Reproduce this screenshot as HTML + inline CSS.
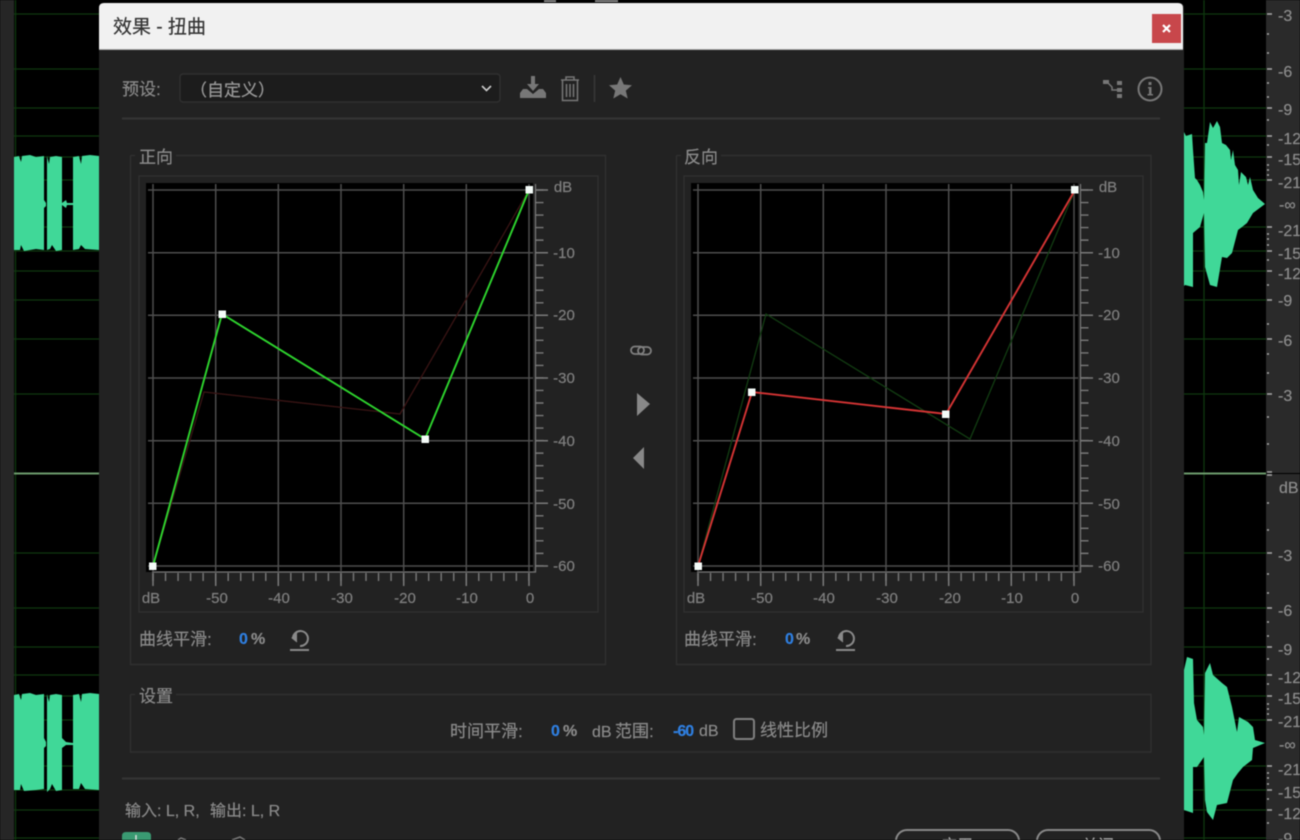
<!DOCTYPE html>
<html><head><meta charset="utf-8"><style>
html,body{margin:0;padding:0;background:#000;width:1300px;height:840px;overflow:hidden}
svg{display:block;filter:blur(.5px)}
text{font-family:"Liberation Sans","Noto Sans CJK SC",sans-serif;fill:#8a8a8a;font-size:15px;stroke:#8a8a8a;stroke-width:.2}
.cn{font-size:17px}
.b{fill:#2f7fe0;stroke:#2f7fe0;font-weight:bold;font-size:16px}
.p{font-weight:bold;font-size:16px}
.ax{font-size:15px;fill:#7f7f7f;stroke:#7f7f7f;text-anchor:middle}
.r{font-size:16px;fill:#8c8c8c;stroke:#8c8c8c}
</style></head><body>
<svg width="1300" height="840" viewBox="0 0 1300 840" xmlns="http://www.w3.org/2000/svg">
<defs>
<g id="plot">
 <rect x="146" y="183" width="387" height="389" fill="#000"/>
 <g stroke="#4e4e4e" stroke-width="1.500" fill="none">
  <path d="M153 184V571M215.700 184V571M278.300 184V571M341 184V571M403.700 184V571M466.300 184V571M529 184V571"/>
  <path d="M148 190H533M148 252.700H533M148 315.300H533M148 378H533M148 440.700H533M148 503.300H533M148 566H533"/>
 </g>
 <g stroke="#7a7a7a" fill="none">
  <path d="M535.500 184V572H152" stroke-width="1.200"/>
  <path d="M536 190H548M536 252.700H548M536 315.300H548M536 378H548M536 440.700H548M536 503.300H548M536 566H548" stroke-width="1.500"/>
  <path d="M153 573V586M215.700 573V586M278.300 573V586M341 573V586M403.700 573V586M466.300 573V586M529 573V586" stroke-width="1.500"/>
  <line x1="539.500" y1="189.300" x2="539.500" y2="566" stroke-width="8" stroke-dasharray="1.400 11.130"/>
  <line x1="152.300" y1="577" x2="529" y2="577" stroke-width="8" stroke-dasharray="1.400 11.130"/>
 </g>
</g>
</defs>

<!-- background -->
<rect width="1300" height="840" fill="#000"/>
<rect x="0" y="0" width="14" height="840" fill="#262626"/>
<rect x="1266" y="0" width="34" height="840" fill="#2a2a2a"/>
<g stroke="#0e380e" stroke-width="1.300" fill="none">
 <path d="M15.500 0V840M1204 0V840"/>
 <path d="M14 14H1266M14 69H1266M14 108H1266M14 136H1266M14 157H1266M14 180H1266M14 227H1266M14 251H1266M14 271H1266M14 300H1266M14 339H1266M14 394H1266M14 553H1266M14 608H1266M14 647H1266M14 675H1266M14 696H1266M14 720H1266M14 766H1266M14 790H1266M14 810H1266M14 838H1266"/>
</g>
<path d="M14 473.500H1266" stroke="#6c9a6c" stroke-width="2"/>
<path d="M1266 473.500H1300" stroke="#000" stroke-width="1"/>
<path d="M544 0H556V2H544ZM595 0H618V2H595Z" fill="#888"/>

<!-- waves -->
<g fill="#40d898">
 <path d="M14 157L19 156 21 162 22 156 30 155 36 157 44 156V250L36 249 24 251 21 245 20 250 14 250ZM47 156L49 164 50 157 56 156 62 157V250L56 251 52 245 50 249 47 250ZM73 157L79 156 81 164 82 156 90 155 99 156V250L85 249 81 245 79 249 73 250Z"/>
 <path d="M44 200L46 203V206L44 208ZM62 203L66 200 67 203H73V205H67L66 208 62 205Z"/>
 <path d="M14 695L19 694 21 700 22 694 30 693 36 695 44 694V789L36 790 24 791 21 784 20 790 14 790ZM47 694L49 702 50 695 56 694 62 695V790L56 791 52 784 50 789 47 792ZM73 695L79 694 81 702 82 694 90 693 99 694V790L85 789 81 783 79 789 73 789Z"/>
 <path d="M44 738L46 742V746L44 748ZM62 738L66 742 73 743V745L66 745 62 748Z"/>
 <path d="M1184 132L1186 136 1192 134 1193 150 1195 178 1197 180 1200 185 1203 192 1204 200 1205 143 1207 143 1210 122 1213 128 1217 121 1220 127 1222 143 1226 145 1230 150 1231 160 1233 150 1235 165 1238 170 1239 185 1241 172 1246 177 1248 185 1250 177 1253 190 1258 198 1265 204 1253 213 1247 223 1242 227 1238 230 1232 253 1227 258 1222 257 1217 287 1210 285 1205 267 1204 213 1200 227 1193 233 1193 287 1185 285 1184 286Z"/>
 <path d="M1184 670L1187 657 1193 659 1194 703 1197 720 1203 727 1204 735 1205 673 1210 663 1213 675 1222 683 1227 687 1232 707 1237 732 1239 717 1248 722 1253 727 1255 740 1265 743 1253 748 1252 760 1243 767 1238 773 1233 780 1227 803 1217 805 1213 820 1207 812 1205 800 1204 757 1197 767 1193 767 1193 813 1184 810Z"/>
</g>

<!-- right ruler -->
<g stroke="#aaa" stroke-width="1.600" fill="none">
 <path d="M1267 14H1272M1267 69H1272M1267 108H1272M1267 136H1272M1267 157H1272M1267 180H1272M1267 227H1272M1267 251H1272M1267 271H1272M1267 300H1272M1267 339H1272M1267 394H1272M1267 472H1272M1267 475H1272M1267 553H1272M1267 608H1272M1267 647H1272M1267 675H1272M1267 696H1272M1267 720H1272M1267 766H1272M1267 790H1272M1267 810H1272"/>
 <path d="M1267 34H1269M1267 53H1269M1267 83H1269M1267 97H1269M1267 120H1269M1267 145H1269M1267 165H1269M1267 170H1269M1267 175H1269M1267 234H1269M1267 239H1269M1267 245H1269M1267 260H1269M1267 285H1269M1267 324H1269M1267 354H1269M1267 373H1269M1267 417H1269M1267 444H1269M1267 503H1269M1267 530H1269M1267 574H1269M1267 593H1269M1267 622H1269M1267 636H1269M1267 659H1269M1267 684H1269M1267 704H1269M1267 709H1269M1267 714H1269M1267 773H1269M1267 778H1269M1267 784H1269M1267 799H1269M1267 823H1269"/>
</g>
<text class="r" x="1278" y="21">-3</text><text class="r" x="1278" y="77">-6</text><text class="r" x="1278" y="115">-9</text>
<text class="r" x="1278" y="144">-12</text><text class="r" x="1278" y="165">-15</text><text class="r" x="1278" y="188">-21</text>
<text class="r" x="1279" y="210">-∞</text><text class="r" x="1278" y="236">-21</text><text class="r" x="1278" y="259">-15</text>
<text class="r" x="1278" y="279">-12</text><text class="r" x="1278" y="306">-9</text><text class="r" x="1278" y="346">-6</text>
<text class="r" x="1278" y="401">-3</text><text class="r" x="1279" y="493">dB</text><text class="r" x="1278" y="561">-3</text>
<text class="r" x="1278" y="616">-6</text><text class="r" x="1278" y="655">-9</text><text class="r" x="1278" y="683">-12</text>
<text class="r" x="1278" y="704">-15</text><text class="r" x="1278" y="727">-21</text><text class="r" x="1279" y="750">-∞</text>
<text class="r" x="1278" y="775">-21</text><text class="r" x="1278" y="798">-15</text><text class="r" x="1278" y="819">-12</text><text class="r" x="1278" y="844">-9</text>

<!-- dialog -->
<path d="M99 850V8Q99 3 104 3H1179Q1184 3 1184 8V850Z" fill="#222"/>
<path d="M99 49V8Q99 3 104 3H1178Q1183 3 1183 8V49Z" fill="#f1f1f1"/>
<rect x="99" y="49" width="1084" height="1" fill="#aaa"/>
<text x="113" y="33" style="font-size:19px;fill:#333;stroke:#333">效果 - 扭曲</text>
<rect x="1152" y="14" width="29" height="29" fill="#c8474b"/>
<path d="M1163 25L1170 32M1170 25L1163 32" stroke="#fff" stroke-width="2.200" fill="none"/>

<!-- toolbar -->
<text class="cn" x="122" y="95">预设:</text>
<rect x="180" y="74" width="320" height="28" rx="3" fill="#1c1c1c" stroke="#303030" stroke-width="1.400"/>
<text class="cn" x="190" y="96" style="fill:#9a9a9a;stroke:#9a9a9a">（自定义）</text>
<path d="M482 86L486.500 90.500 491 86" stroke="#ccc" stroke-width="1.600" fill="none"/>
<path d="M531 76H535V84H539L533 91 527 84H531Z" fill="#777"/>
<path d="M523 89H527L533 94 539 89H543L546 93V98H520V93Z" fill="#777"/>
<g stroke="#777" fill="none" stroke-width="1.500">
 <path d="M561 80H579M566 80V77H574V80M562.500 80.500V100.500H577.500V80.500"/>
 <path d="M566.500 84V97M570 84V97M573.500 84V97"/>
</g>
<rect x="593.500" y="75" width="2" height="27" fill="#333"/>
<path d="M620.500 77L623.800 84.500 632 85.300 625.800 90.600 627.700 98.500 620.500 94.300 613.300 98.500 615.200 90.600 609 85.300 617.200 84.500Z" fill="#777"/>
<g fill="#777">
 <rect x="1103" y="80" width="6" height="4"/><rect x="1117" y="81" width="5" height="4"/><rect x="1117" y="88" width="5" height="4"/><rect x="1117" y="94" width="5" height="4"/>
</g>
<path d="M1108 83L1112 87V90H1117" stroke="#777" stroke-width="1.500" fill="none"/>
<circle cx="1150" cy="89" r="11.500" fill="none" stroke="#777" stroke-width="2"/>
<path d="M1148.500 82h3v3h-3zM1148 87h3.500v7h1.500v1.500h-5.500v-1.500h1.500v-5.500h-1z" fill="#777"/>
<rect x="122" y="117.500" width="1038" height="2" fill="#353535"/>

<!-- fieldsets -->
<g fill="none" stroke="#303030" stroke-width="1.400">
 <path d="M130.500 155.500V664.500H605.500V155.500H176"/><path d="M130.500 155.500H135"/>
 <path d="M676.500 155.500V664.500H1151V155.500H721"/><path d="M676.500 155.500H681"/>
 <path d="M130.500 694.500V752H1151V694.500H176"/><path d="M130.500 694.500H135"/>
 <rect x="139" y="176" width="459" height="436"/>
 <rect x="684" y="176" width="459" height="436"/>
</g>
<text class="cn" x="139" y="163">正向</text>
<text class="cn" x="684" y="163">反向</text>
<text class="cn" x="139" y="702">设置</text>

<use href="#plot"/>
<use href="#plot" x="545"/>

<!-- left curves -->
<polyline points="153,566 204,392 400,414 529,190" fill="none" stroke="#3a1414" stroke-width="1.300"/>
<polyline points="153,566 222,314 425,439 529,190" fill="none" stroke="#2ed62e" stroke-width="1.900"/>
<g fill="#f4fbf8">
 <rect x="149" y="562.500" width="7.500" height="7.500"/><rect x="218.500" y="310.500" width="7.500" height="7.500"/><rect x="421.500" y="435.500" width="7.500" height="7.500"/><rect x="525.500" y="186" width="7.500" height="7.500"/>
</g>
<!-- right curves -->
<polyline points="698,566 766,314 970,439 1075,190" fill="none" stroke="#123d12" stroke-width="1.300"/>
<polyline points="698,566 752,392 946,414 1075,190" fill="none" stroke="#d63434" stroke-width="1.900"/>
<g fill="#f4fbf8">
 <rect x="694.500" y="562.500" width="7.500" height="7.500"/><rect x="748" y="388.500" width="7.500" height="7.500"/><rect x="942" y="410.500" width="7.500" height="7.500"/><rect x="1071" y="186" width="7.500" height="7.500"/>
</g>

<!-- axis labels left -->
<text class="ax" x="563" y="192">dB</text><text class="ax" x="564" y="258">-10</text><text class="ax" x="564" y="320">-20</text><text class="ax" x="564" y="383">-30</text><text class="ax" x="564" y="446">-40</text><text class="ax" x="564" y="509">-50</text><text class="ax" x="564" y="571">-60</text>
<text class="ax" x="151" y="603">dB</text><text class="ax" x="217" y="603">-50</text><text class="ax" x="279" y="603">-40</text><text class="ax" x="342" y="603">-30</text><text class="ax" x="405" y="603">-20</text><text class="ax" x="467" y="603">-10</text><text class="ax" x="530" y="603">0</text>
<!-- axis labels right -->
<text class="ax" x="1108" y="192">dB</text><text class="ax" x="1109" y="258">-10</text><text class="ax" x="1109" y="320">-20</text><text class="ax" x="1109" y="383">-30</text><text class="ax" x="1109" y="446">-40</text><text class="ax" x="1109" y="509">-50</text><text class="ax" x="1109" y="571">-60</text>
<text class="ax" x="696" y="603">dB</text><text class="ax" x="762" y="603">-50</text><text class="ax" x="824" y="603">-40</text><text class="ax" x="887" y="603">-30</text><text class="ax" x="950" y="603">-20</text><text class="ax" x="1012" y="603">-10</text><text class="ax" x="1075" y="603">0</text>

<!-- smoothing -->
<text class="cn" x="139" y="645">曲线平滑:</text><text class="b" x="239" y="644">0</text><text class="p" x="251" y="644">%</text>
<text class="cn" x="684" y="645">曲线平滑:</text><text class="b" x="785" y="644">0</text><text class="p" x="796" y="644">%</text>
<g fill="none" stroke="#8a8a8a" stroke-width="2">
 <path d="M293 637.500A7.500 7.500 0 1 1 300 646"/><path d="M297 633L292 638 297 642" fill="#8a8a8a" stroke-width="1"/><path d="M290 650H309"/>
</g>
<g fill="none" stroke="#8a8a8a" stroke-width="2" transform="translate(546 0)">
 <path d="M293 637.500A7.500 7.500 0 1 1 300 646"/><path d="M297 633L292 638 297 642" fill="#8a8a8a" stroke-width="1"/><path d="M290 650H309"/>
</g>

<!-- middle icons -->
<g fill="none" stroke="#808080" stroke-width="1.800">
 <rect x="631" y="346.500" width="13" height="7.500" rx="3.700"/><rect x="638" y="347" width="13" height="7.500" rx="3.700"/>
</g>
<path d="M637 393L650 404 637 416Z" fill="#888"/>
<path d="M644 447L633 458 644 469Z" fill="#888"/>

<!-- settings -->
<text class="cn" x="450" y="737">时间平滑:</text>
<text class="b" x="551" y="736">0</text><text class="p" x="563" y="736">%</text>
<text x="592" y="737" style="font-size:16px">dB</text><text class="cn" x="615" y="737">范围:</text>
<text class="b" x="673" y="736" style="letter-spacing:-1px">-60</text><text x="699" y="736" style="font-size:16px">dB</text>
<rect x="734" y="719" width="20" height="20" rx="2.500" fill="none" stroke="#808080" stroke-width="2"/>
<text class="cn" x="760" y="736">线性比例</text>

<rect x="122" y="777.500" width="1038" height="2" fill="#353535"/>
<text x="125" y="816" style="font-size:16px">输入: L, R,</text>
<text x="210" y="816" style="font-size:16px">输出: L, R</text>

<!-- bottom -->
<path d="M122 842V836Q122 832 126 832H147Q151 832 151 836V842Z" fill="#3a9a72"/>
<path d="M136 835V840" stroke="#ddd" stroke-width="1.500"/>
<path d="M178 840L181 838 186 840M232 840L240 837 245 840" stroke="#777" stroke-width="1.500" fill="none"/>
<rect x="896" y="830" width="123" height="30" rx="11" fill="none" stroke="#888" stroke-width="2"/>
<rect x="1037" y="830" width="123" height="30" rx="11" fill="none" stroke="#888" stroke-width="2"/>
<text x="941" y="851" style="font-size:16px;fill:#aaa;stroke:#aaa">应用</text>
<text x="1082" y="851" style="font-size:16px;fill:#aaa;stroke:#aaa">关闭</text>
</svg>
</body></html>
